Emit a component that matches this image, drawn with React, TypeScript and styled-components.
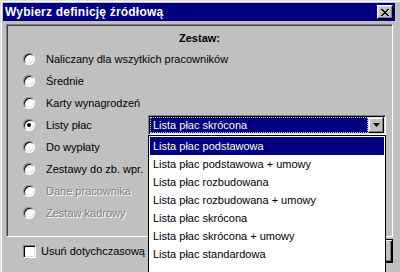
import React from "react"
import styled, { createGlobalStyle } from "styled-components"

const GlobalStyle = createGlobalStyle`
  html, body {
    margin: 0;
    padding: 0;
    overflow: hidden;
    background: #c0c0c0;
  }
  body {
    font-family: "Liberation Sans", Arial, sans-serif;
    font-size: 11px;
    color: #000;
  }
`

const Window = styled.div`
  position: relative;
  box-sizing: border-box;
  width: 400px;
  height: 272px;
  overflow: hidden;
  background: #c0c0c0;
  border-top: 1px solid #dfdfdf;
  border-left: 1px solid #dfdfdf;
  box-shadow: inset 1px 1px 0 #fff;
  padding: 2px 5px 0 2px;
  display: flex;
  flex-direction: column;
`

const TitleBar = styled.div`
  height: 18px;
  flex: none;
  background: #000080;
  color: #fff;
  display: flex;
  align-items: center;
  justify-content: space-between;
  padding: 0 2px 0 2px;
  font-weight: bold;
  font-size: 12px;
  letter-spacing: 0.2px;
`

const CloseButton = styled.div`
  box-sizing: border-box;
  width: 16px;
  height: 14px;
  background: #c0c0c0;
  border-top: 1px solid #fff;
  border-left: 1px solid #fff;
  border-right: 1px solid #000;
  border-bottom: 1px solid #000;
  box-shadow: inset -1px -1px 0 #808080, inset 1px 1px 0 #dfdfdf;
  display: flex;
  align-items: center;
  justify-content: center;
`

const GroupBox = styled.div`
  box-sizing: border-box;
  height: 213px;
  margin: 3px 2px 0 3px;
  border: 1px solid;
  border-color: #808080 #fff #fff #808080;
  box-shadow: inset 1px 1px 0 #404040;
  padding: 6px 0 0 0;
`

const Heading = styled.div`
  text-align: center;
  font-weight: bold;
  line-height: 14px;
  height: 14px;
  margin-bottom: 3px;
`

const Row = styled.div`
  height: 22px;
  display: flex;
  align-items: center;
  padding-left: 16px;
`

const Radio = styled.span<{ checked?: boolean }>`
  position: relative;
  box-sizing: border-box;
  flex: none;
  width: 12px;
  height: 12px;
  border-radius: 50%;
  background: #fff;
  border: 1px solid;
  border-color: #808080 #fff #fff #808080;
  box-shadow: inset 1px 1px 0 #000, inset -1px -1px 0 #dfdfdf;

  &::after {
    content: "";
    display: ${(p) => (p.checked ? "block" : "none")};
    position: absolute;
    left: 3px;
    top: 3px;
    width: 4px;
    height: 4px;
    border-radius: 50%;
    background: #000;
  }
`

const Label = styled.span<{ disabled?: boolean }>`
  margin-left: 11px;
  line-height: 13px;
  white-space: nowrap;
  color: ${(p) => (p.disabled ? "#808080" : "#000")};
  text-shadow: ${(p) => (p.disabled ? "1px 1px 0 #fff" : "none")};
`

const Combo = styled.div`
  position: relative;
  box-sizing: border-box;
  width: 238px;
  height: 20px;
  margin-left: auto;
  margin-right: 6px;
  background: #fff;
  border: 1px solid;
  border-color: #808080 #fff #fff #808080;
  box-shadow: inset 1px 1px 0 #000, inset -1px -1px 0 #dfdfdf;
  padding: 1px;
  display: flex;
`

const ComboValue = styled.div`
  flex: 1;
  box-sizing: border-box;
  height: 16px;
  background: #000080;
  color: #fff;
  border: 1px dotted #c8c8c8;
  padding-left: 2px;
  line-height: 14px;
`

const ArrowButton = styled.div`
  box-sizing: border-box;
  flex: none;
  width: 16px;
  height: 16px;
  background: #c0c0c0;
  border-top: 1px solid #dfdfdf;
  border-left: 1px solid #dfdfdf;
  border-right: 1px solid #000;
  border-bottom: 1px solid #000;
  box-shadow: inset -1px -1px 0 #808080, inset 1px 1px 0 #fff;
  display: flex;
  align-items: center;
  justify-content: center;
`

const DropList = styled.div`
  position: absolute;
  z-index: 10;
  left: -1px;
  top: calc(100% + 1px);
  box-sizing: border-box;
  width: 238px;
  height: 150px;
  background: #fff;
  border: 1px solid #000;
  padding: 1px;
`

const ListItem = styled.div<{ selected?: boolean }>`
  height: 18px;
  line-height: 18px;
  padding-left: 3px;
  white-space: nowrap;
  background: ${(p) => (p.selected ? "#000080" : "transparent")};
  color: ${(p) => (p.selected ? "#fff" : "#000")};
`

const BottomRow = styled.div`
  display: flex;
  align-items: center;
  height: 24px;
  margin-top: 2px;
  padding-left: 20px;
`

const Checkbox = styled.span`
  box-sizing: border-box;
  flex: none;
  width: 13px;
  height: 13px;
  background: #fff;
  border: 1px solid;
  border-color: #808080 #fff #fff #808080;
  box-shadow: inset 1px 1px 0 #000, inset -1px -1px 0 #dfdfdf;
`

const CheckLabel = styled.span`
  margin-left: 5px;
  white-space: nowrap;
`

const DefaultButton = styled.div`
  box-sizing: border-box;
  width: 75px;
  height: 24px;
  margin-left: auto;
  margin-right: 2px;
  border: 1px solid #000;
  background: #c0c0c0;
  box-shadow: inset 1px 1px 0 #fff, inset -1px -1px 0 #000,
    inset -2px -2px 0 #808080;
  display: flex;
  align-items: center;
  justify-content: center;
`

const sources = [
  { id: "all", name: "Naliczany dla wszytkich pracowników" },
  { id: "avg", name: "Średnie" },
  { id: "cards", name: "Karty wynagrodzeń" },
  { id: "lists", name: "Listy płac", checked: true, combo: true },
  { id: "pay", name: "Do wypłaty" },
  { id: "sets", name: "Zestawy do zb. wpr." },
  { id: "emp", name: "Dane pracownika", disabled: true },
  { id: "hr", name: "Zestaw kadrowy", disabled: true },
]

const lists = [
  "Lista płac podstawowa",
  "Lista płac podstawowa + umowy",
  "Lista płac rozbudowana",
  "Lista płac rozbudowana + umowy",
  "Lista płac skrócona",
  "Lista płac skrócona + umowy",
  "Lista płac standardowa",
]

function App(): JSX.Element {
  return (
    <Window>
      <GlobalStyle />
      <TitleBar>
        <span>Wybierz definicję źródłową</span>
        <CloseButton>
          <svg width="8" height="7" viewBox="0 0 8 7">
            <path
              d="M0 0h2v1h1v1h2V1h1V0h2v1H7v1H6v1H5v1h1v1h1v1h1v1H6V6H5V5H3v1H2v1H0V6h1V5h1V4h1V3H2V2H1V1H0z"
              fill="#000"
            />
          </svg>
        </CloseButton>
      </TitleBar>
      <GroupBox>
        <Heading>Zestaw:</Heading>
        {sources.map((s) => (
          <Row key={s.id}>
            <Radio checked={s.checked} />
            <Label disabled={s.disabled}>{s.name}</Label>
            {s.combo && (
              <Combo>
                <ComboValue>Lista płac skrócona</ComboValue>
                <ArrowButton>
                  <svg width="7" height="4" viewBox="0 0 7 4">
                    <path d="M0 0h7L3.5 4z" fill="#000" />
                  </svg>
                </ArrowButton>
                <DropList>
                  {lists.map((l, i) => (
                    <ListItem key={l} selected={i === 0}>
                      {l}
                    </ListItem>
                  ))}
                </DropList>
              </Combo>
            )}
          </Row>
        ))}
      </GroupBox>
      <BottomRow>
        <Checkbox />
        <CheckLabel>Usuń dotychczasową</CheckLabel>
        <DefaultButton>OK</DefaultButton>
      </BottomRow>
    </Window>
  )
}

export default App
